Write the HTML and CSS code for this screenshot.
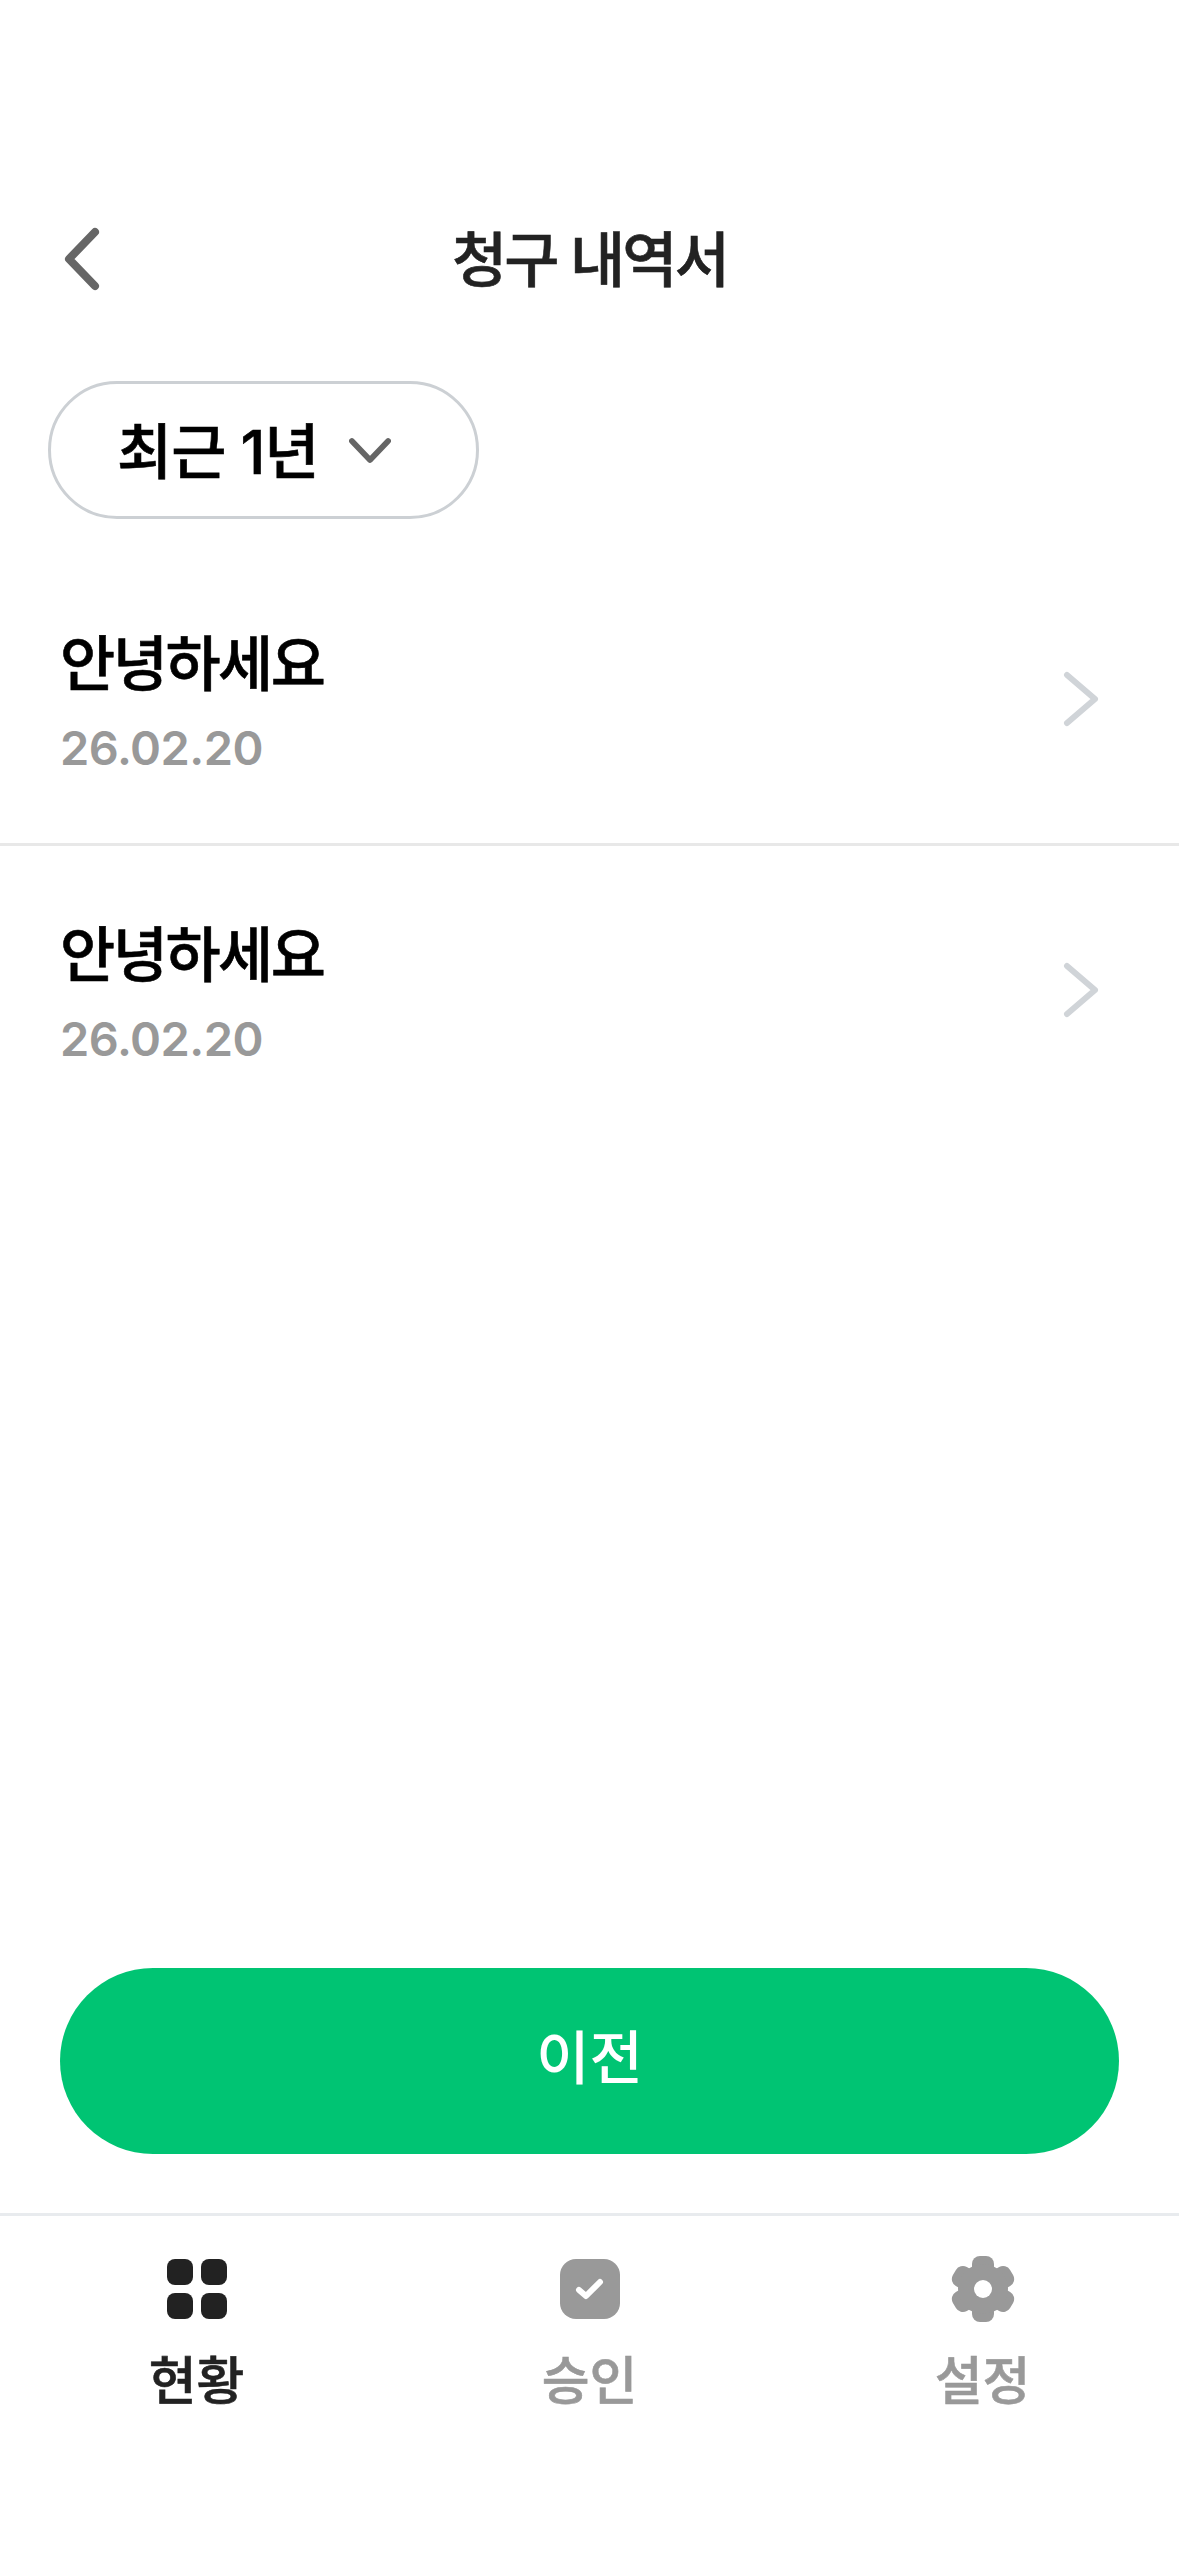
FILE: index.html
```html
<!DOCTYPE html>
<html lang="ko">
<head>
  <meta charset="UTF-8" />
  <meta name="viewport" content="width=device-width, initial-scale=1.0" />
  <title>청구 내역서</title>
  <link rel="stylesheet" href="styles.css">
</head>
<body>
  <div class="page">
    <div class="header">
      <svg class="back" viewBox="0 0 40 64" fill="none" stroke="#666" stroke-width="8" stroke-linecap="round" stroke-linejoin="round">
        <path d="M32 5 L6 32 L32 59" />
      </svg>
      <h1 class="title">청구 내역서</h1>
    </div>

    <div class="filter">
      <span class="filter-label">최근 1년</span>
      <svg class="filter-arrow" viewBox="0 0 44 28" fill="none" stroke="#666" stroke-width="6" stroke-linecap="round" stroke-linejoin="round">
        <path d="M3 4 L22 24 L41 4" />
      </svg>
    </div>

    <div class="list">
      <div class="item">
        <div class="item-text">
          <div class="item-name">안녕하세요</div>
          <div class="item-date">26.02.20</div>
        </div>
        <svg class="item-arrow" viewBox="0 0 36 56" fill="none" stroke="#d0d4d8" stroke-width="6" stroke-linecap="round" stroke-linejoin="round">
          <path d="M4 4 L32 28 L4 52" />
        </svg>
      </div>
      <div class="item">
        <div class="item-text">
          <div class="item-name">안녕하세요</div>
          <div class="item-date">26.02.20</div>
        </div>
        <svg class="item-arrow" viewBox="0 0 36 56" fill="none" stroke="#d0d4d8" stroke-width="6" stroke-linecap="round" stroke-linejoin="round">
          <path d="M4 4 L32 28 L4 52" />
        </svg>
      </div>
    </div>

    <button class="prev-btn">이전</button>

    <div class="tabbar">
      <div class="tab active">
        <svg class="tab-icon" viewBox="0 0 66 66" fill="#222">
          <rect x="3" y="3" width="26" height="26" rx="8" />
          <rect x="37" y="3" width="26" height="26" rx="8" />
          <rect x="3" y="37" width="26" height="26" rx="8" />
          <rect x="37" y="37" width="26" height="26" rx="8" />
        </svg>
        <span>현황</span>
      </div>
      <div class="tab">
        <svg class="tab-icon" viewBox="0 0 66 66">
          <rect x="3" y="3" width="60" height="60" rx="16" fill="#999" />
          <path d="M22 34 L29 40 L43 26" fill="none" stroke="#fff" stroke-width="6" stroke-linecap="round" stroke-linejoin="round" />
        </svg>
        <span>승인</span>
      </div>
      <div class="tab">
        <svg class="tab-icon" viewBox="0 0 66 66" fill="#999">
          <g transform="translate(33 33)">
            <rect x="-11" y="-33" width="22" height="66" rx="8" />
            <rect x="-11" y="-33" width="22" height="66" rx="8" transform="rotate(60)" />
            <rect x="-11" y="-33" width="22" height="66" rx="8" transform="rotate(120)" />
            <circle r="25" />
            <circle r="9" fill="#fff" />
          </g>
        </svg>
        <span>설정</span>
      </div>
    </div>
  </div>
</body>
</html>
```

FILE: styles.css
```css
* {
  box-sizing: border-box;
}
body {
  margin: 0;
  background: #fff;
  font-family: Inter, "Noto Sans CJK KR", sans-serif;
}
.page {
  width: 1179px;
  height: 2556px;
  display: flex;
  flex-direction: column;
}
.header {
  margin-top: 216px;
  height: 84px;
  padding: 0 60px 0 63px;
  display: grid;
  grid-template-columns: 1fr auto 1fr;
  align-items: center;
}
.back {
  width: 40px;
  height: 64px;
}
.title {
  margin: 2px 3px 0 0;
  font-size: 60px;
  font-weight: 500;
  letter-spacing: -2.8px;
  line-height: 84px;
  color: #222;
  -webkit-text-stroke: 0.6px #222;
}
.filter {
  margin: 81px 0 0 48px;
  width: 431px;
  height: 138px;
  border: 3px solid #ccd0d4;
  border-radius: 69px;
  display: flex;
  align-items: center;
  padding: 0 0 0 66px;
  gap: 30px;
}
.filter-label {
  margin-top: -5px;
  font-size: 60px;
  font-weight: 500;
  letter-spacing: -1px;
  color: #000;
  -webkit-text-stroke: 0.6px #000;
}
.filter-arrow {
  width: 42px;
  height: 27px;
}
.list {
  margin-top: 36px;
  flex: 1;
}
.item {
  height: 291px;
  padding: 0 80px 0 60px;
  display: flex;
  align-items: center;
  justify-content: space-between;
  border-bottom: 3px solid #e8e8e8;
}
.item:last-child {
  border-bottom-color: transparent;
}
.item-name {
  font-size: 60px;
  font-weight: 500;
  letter-spacing: -2.5px;
  line-height: 84px;
  color: #000;
  -webkit-text-stroke: 0.6px #000;
}
.item-date {
  margin-top: 14px;
  font-size: 47px;
  font-weight: 600;
  letter-spacing: -0.5px;
  line-height: 56px;
  color: #999;
}
.item-arrow {
  width: 36px;
  height: 56px;
}
.prev-btn {
  margin: 0 60px 59px;
  height: 186px;
  padding: 0 0 14px;
  border: 0;
  border-radius: 93px;
  background: #00c473;
  color: #fff;
  font-family: inherit;
  font-size: 58px;
  font-weight: 500;
}
.tabbar {
  height: 343px;
  border-top: 3px solid #e8ebee;
  display: flex;
  padding-top: 40px;
}
.tab {
  flex: 1;
  display: flex;
  flex-direction: column;
  align-items: center;
  font-size: 52px;
  font-weight: 500;
  line-height: 70px;
  color: #999;
  -webkit-text-stroke: 0.6px #999;
}
.tab.active {
  color: #222;
  -webkit-text-stroke: 0.6px #222;
}
.tab-icon {
  width: 66px;
  height: 66px;
  margin-bottom: 25px;
}
```
